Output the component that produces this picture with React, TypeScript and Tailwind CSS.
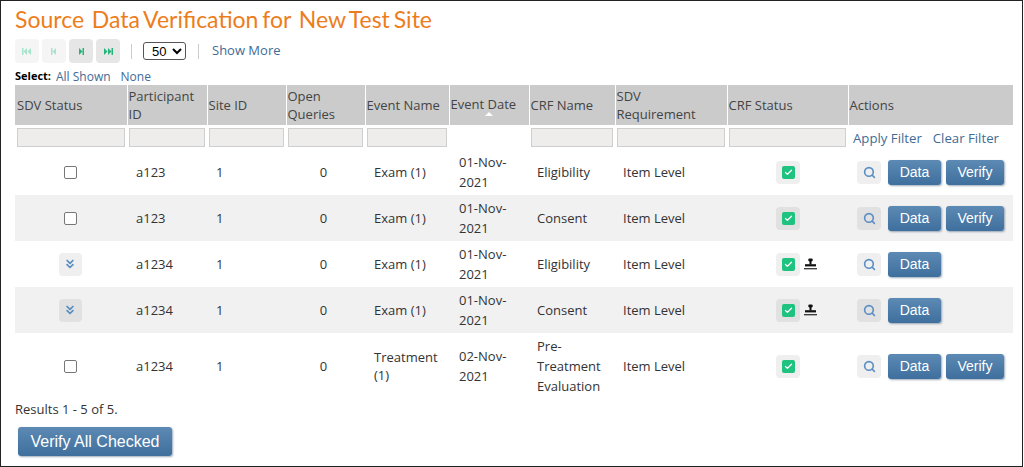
import { Check, ChevronsDown, Search } from "lucide-react";

const BODY_FONT = "font-['Open_Sans',sans-serif]";

const HEADERS: { label: string; width: string; sorted?: boolean; narrow?: boolean }[] = [
  { label: "SDV Status", width: "w-[112px]" },
  { label: "Participant ID", width: "w-[80px]" },
  { label: "Site ID", width: "w-[79px]" },
  { label: "Open Queries", width: "w-[79px]" },
  { label: "Event Name", width: "w-[84px]" },
  { label: "Event Date", width: "w-[80px]", sorted: true },
  { label: "CRF Name", width: "w-[86px]" },
  { label: "SDV Requirement", width: "w-[112px]", narrow: true },
  { label: "CRF Status", width: "w-[121px]" },
  { label: "Actions", width: "w-[165px]" },
];

const ROWS = [
  { id: "a123", sdv: "check", event: "Exam (1)", date: "01-Nov-2021", crf: "Eligibility", signed: false, verify: true },
  { id: "a123", sdv: "check", event: "Exam (1)", date: "01-Nov-2021", crf: "Consent", signed: false, verify: true },
  { id: "a1234", sdv: "done", event: "Exam (1)", date: "01-Nov-2021", crf: "Eligibility", signed: true, verify: false },
  { id: "a1234", sdv: "done", event: "Exam (1)", date: "01-Nov-2021", crf: "Consent", signed: true, verify: false },
  { id: "a1234", sdv: "check", event: "Treatment (1)", date: "02-Nov-2021", crf: "Pre-Treatment Evaluation", signed: false, verify: true },
];

function PagerIcon({ kind, enabled }: { kind: "first" | "prev" | "next" | "last"; enabled: boolean }) {
  const left = kind === "first" || kind === "prev";
  const double = kind === "first" || kind === "last";
  return (
    <span
      className={`flex h-[24px] w-[24px] items-center justify-center rounded-sm ${
        enabled ? "bg-[#e6e6e6] text-[#26b47c]" : "bg-[#f4f5f4] text-[#a8e3cb]"
      }`}
    >
      <svg width="12" height="9" viewBox="0 0 12 8" fill="currentColor">
        {left ? (
          <>
            <rect x={double ? 1 : 3} y="0.5" width="1.5" height="7" />
            <path d={double ? "M6 0.5 2.5 4 6 7.5Z" : "M8 0.5 4.5 4 8 7.5Z"} />
            {double && <path d="M10 0.5 6.5 4 10 7.5Z" />}
          </>
        ) : (
          <>
            <path d={double ? "M2 0.5 5.5 4 2 7.5Z" : "M4 0.5 7.5 4 4 7.5Z"} />
            {double && <path d="M6 0.5 9.5 4 6 7.5Z" />}
            <rect x={double ? 9.5 : 7.5} y="0.5" width="1.5" height="7" />
          </>
        )}
      </svg>
    </span>
  );
}

function BlueButton({ label, width }: { label: string; width: string }) {
  return (
    <button
      className={`h-[25px] ${width} rounded-[3px] bg-gradient-to-b from-[#5c8ab4] to-[#3f6f9d] text-[14px] text-white shadow-[1px_1px_2px_rgba(60,90,120,0.5)] font-['Liberation_Sans',sans-serif]`}
    >
      {label}
    </button>
  );
}

function IconTile({ gray, className, children }: { gray: boolean; className: string; children: React.ReactNode }) {
  return (
    <span className={`flex items-center justify-center rounded-sm ${gray ? "bg-[#e1e1e1]" : "bg-[#efefef]"} ${className}`}>
      {children}
    </span>
  );
}

function Stamp() {
  return (
    <svg width="13" height="13" viewBox="0 0 13 13" className="ml-[4px]">
      <rect x="4.2" y="0.5" width="4.6" height="3" rx="1.4" fill="#111" />
      <rect x="5.5" y="3" width="2" height="3.5" fill="#111" />
      <rect x="1" y="6.2" width="11" height="2.2" fill="#111" />
      <rect x="0" y="10.2" width="13" height="1.1" fill="#111" />
    </svg>
  );
}

export default function App() {
  return (
    <div className={`h-[467px] w-[1023px] overflow-hidden border border-[#222] bg-white text-[#333] ${BODY_FONT}`}>
      <div className="pl-[14px] pr-[8px]">
        <h1 className="mt-[3px] h-[30px] text-[23px] leading-[30px] text-[#ed7d1b] [word-spacing:-2px] font-['Lato',sans-serif]">
          Source&nbsp; Data Verification for&nbsp; New Test Site
        </h1>

        <div className="mt-[4px] flex h-[26px] items-center">
          <div className="flex gap-[3px]">
            <PagerIcon kind="first" enabled={false} />
            <PagerIcon kind="prev" enabled={false} />
            <PagerIcon kind="next" enabled />
            <PagerIcon kind="last" enabled />
          </div>
          <span className="ml-[11px] mr-[11px] h-[15px] w-px bg-[#ccc]" />
          <select
            defaultValue="50"
            className="h-[18px] w-[43px] rounded-[3px] border border-[#555] bg-white pl-[4px] text-[13px] leading-none text-black font-['Liberation_Sans',sans-serif]"
          >
            <option>50</option>
          </select>
          <span className="ml-[12px] mr-[13px] h-[15px] w-px bg-[#ccc]" />
          <a className="text-[13px] text-[#3f6b96]">Show More</a>
        </div>

        <div className="mb-[1px] mt-[5px] flex h-[15px] items-center text-[11px]">
          <span className="font-bold text-black">Select:</span>
          <a className="ml-[5px] text-[12px] text-[#3f6b96]">All Shown</a>
          <a className="ml-[10px] text-[12px] text-[#3f6b96]">None</a>
        </div>

        <table className="w-[998px] table-fixed border-collapse text-[13px] leading-[18px]">
          <thead>
            <tr className="h-[40px]">
              {HEADERS.map((h) => (
                <th key={h.label} className={`${h.width} border-x border-white bg-[#cbcbcb] pl-[1px] text-left font-normal text-[#444] first:border-l-0 first:pl-[2px] last:border-r-0 ${h.narrow ? "pr-[10px]" : "pr-[1px]"}`}>
                  <span className="block">{h.label}</span>
                  {h.sorted && (
                    <span className="mx-auto -mt-[1px] block h-0 w-0 border-x-[4px] border-b-[4px] border-x-transparent border-b-white" />
                  )}
                </th>
              ))}
            </tr>
            <tr className="h-[24px]">
              {HEADERS.slice(0, 9).map((h, i) => (
                <td key={h.label} className="px-[2px] pt-[1px]">
                  {i !== 5 && (
                    <span className="block h-[19px] w-full border border-[#cfcfcf] bg-[#efedeb]" />
                  )}
                </td>
              ))}
              <td className="whitespace-nowrap pl-[5px] pt-[1px] text-[13.2px] text-[#3f6b96]">
                Apply Filter<span className="ml-[11px]">Clear Filter</span>
              </td>
            </tr>
          </thead>
          <tbody>
            {ROWS.map((row, i) => {
              const gray = i % 2 === 1;
              const tall = i === 4;
              return (
                <tr key={i} className={`${tall ? "h-[66px]" : "h-[46px]"} ${gray ? "bg-[#f1f1f1]" : "bg-white"}`}>
                  <td>
                    <div className="flex justify-center pr-[2px]">
                      {row.sdv === "check" ? (
                        <span className="block h-[13px] w-[13px] rounded-[2px] border border-[#777] bg-white" />
                      ) : (
                        <IconTile gray={gray} className="h-[23px] w-[23px]">
                          <ChevronsDown size={14} strokeWidth={3} className="text-[#5a8ec4]" />
                        </IconTile>
                      )}
                    </div>
                  </td>
                  <td className="pl-[9px]">{row.id}</td>
                  <td className="pl-[9px]">1</td>
                  <td className="pr-[4px] text-center">0</td>
                  <td className="pl-[9px]">{row.event}</td>
                  <td className="pl-[10px] leading-[20px]">{row.date}</td>
                  <td className="pl-[8px] pr-[8px] leading-[20px]">{row.crf}</td>
                  <td className="pl-[8px]">Item Level</td>
                  <td>
                    <div className="flex items-center pl-[49px]">
                      <IconTile gray={gray} className="h-[23px] w-[24px]">
                        <span className="flex h-[13px] w-[13px] items-center justify-center rounded-[2px] bg-[#1fc27e]">
                          <Check size={9} strokeWidth={3.5} className="text-white" />
                        </span>
                      </IconTile>
                      {row.signed && <Stamp />}
                    </div>
                  </td>
                  <td>
                    <div className="flex items-center pl-[9px]">
                      <IconTile gray={gray} className="h-[23px] w-[24px]">
                        <Search size={13} strokeWidth={3} className="text-[#5a8ec4]" />
                      </IconTile>
                      <span className="ml-[7px] flex"><BlueButton label="Data" width="w-[53px]" /></span>
                      {row.verify && <span className="ml-[5px] flex"><BlueButton label="Verify" width="w-[58px]" /></span>}
                    </div>
                  </td>
                </tr>
              );
            })}
          </tbody>
        </table>

        <p className="mt-[1px] h-[18px] text-[13px] leading-[18px]">Results 1 - 5 of 5.</p>
        <button className="ml-[3px] mt-[9px] h-[29px] w-[154px] rounded-[3px] bg-gradient-to-b from-[#5c8ab4] to-[#3f6f9d] text-[16px] text-white shadow-[1px_1px_2px_rgba(60,90,120,0.5)] font-['Liberation_Sans',sans-serif]">
          Verify All Checked
        </button>
      </div>
    </div>
  );
}
